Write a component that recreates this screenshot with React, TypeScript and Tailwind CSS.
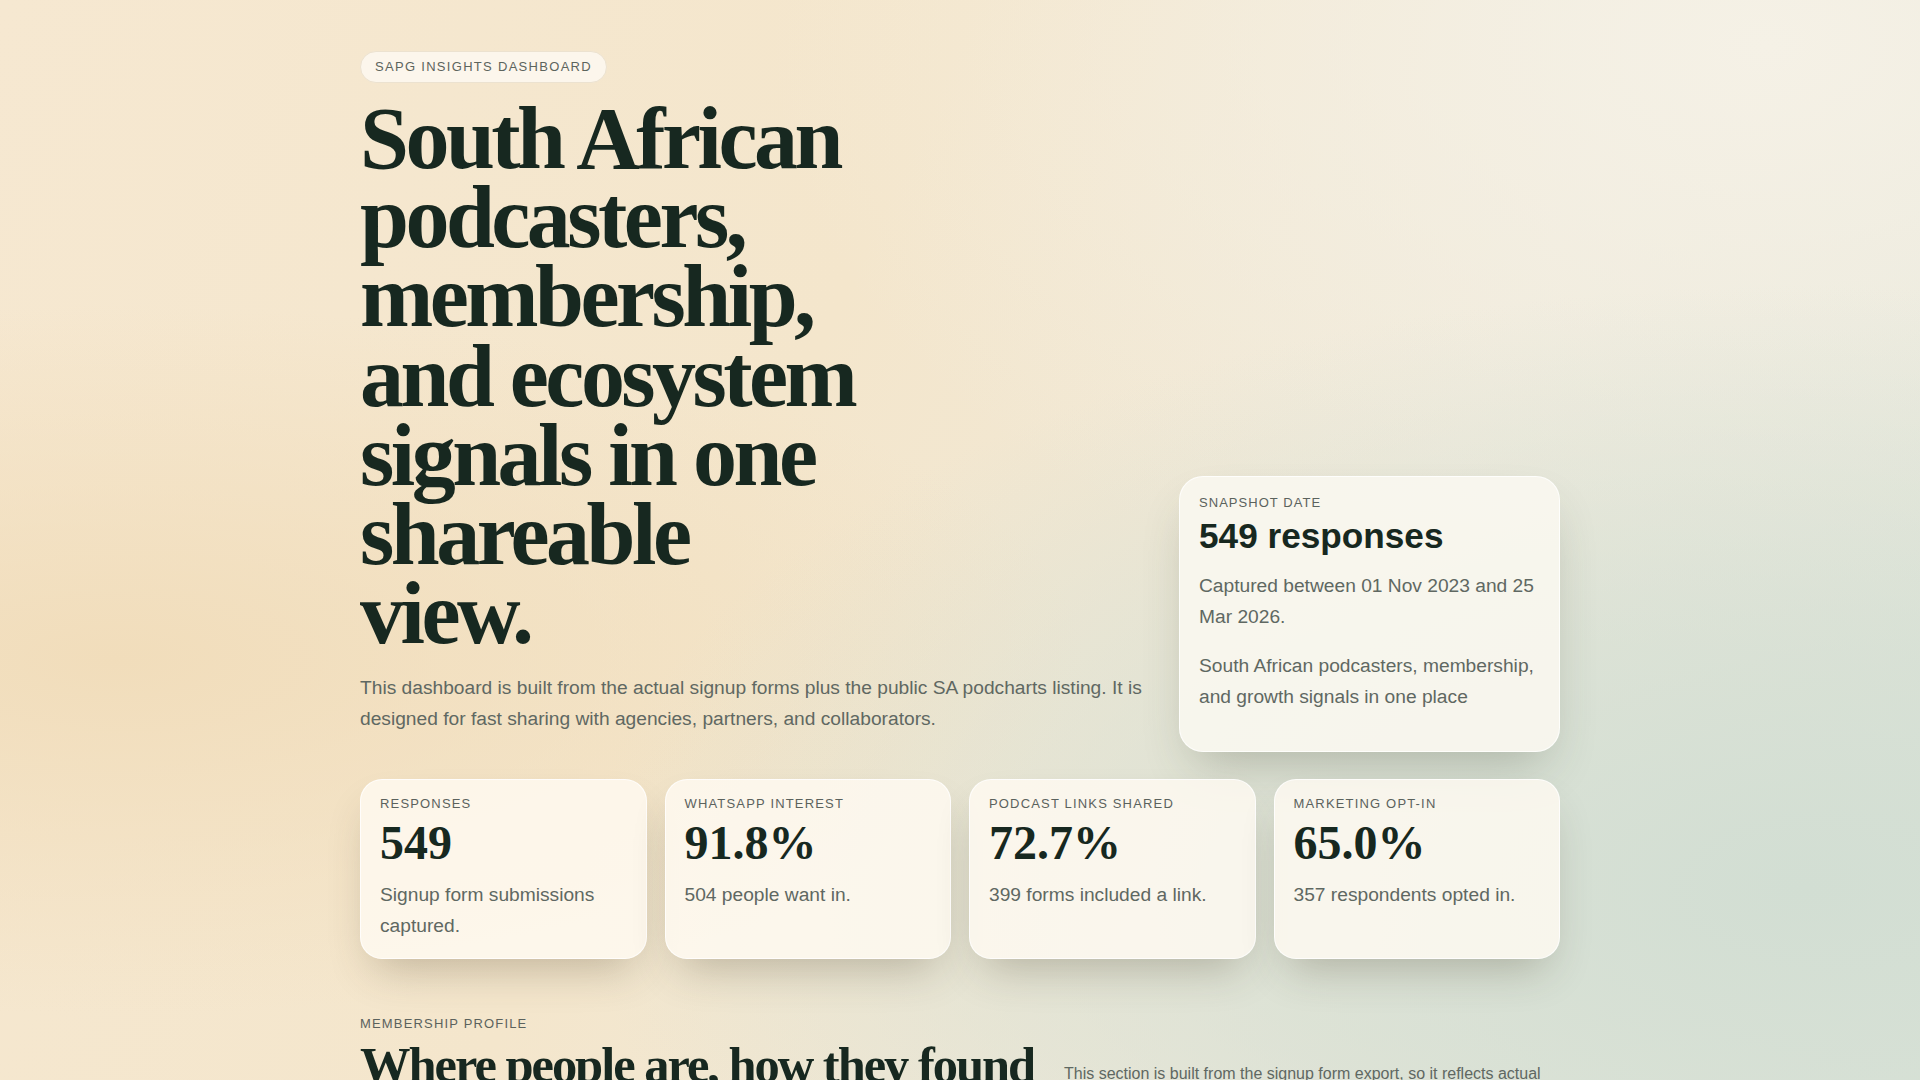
const serif = "font-['Liberation_Serif','Times_New_Roman',serif]";

const stats = [
  { label: 'Responses', value: '549', note: 'Signup form submissions captured.' },
  { label: 'WhatsApp interest', value: '91.8%', note: '504 people want in.' },
  { label: 'Podcast links shared', value: '72.7%', note: '399 forms included a link.' },
  { label: 'Marketing opt-in', value: '65.0%', note: '357 respondents opted in.' },
];

function StatCard({ label, value, note }: { label: string; value: string; note: string }) {
  return (
    <div className="rounded-[22px] border border-white/80 bg-[rgba(255,250,242,0.82)] px-[19px] pt-[15px] pb-[17px] shadow-[0_22px_44px_-14px_rgba(70,60,35,0.3)]">
      <div className="text-[13px] leading-[1.4] tracking-[0.09em] text-[#5b625d] uppercase">{label}</div>
      <div className={`${serif} mt-[6px] text-[48px] leading-none font-bold text-[#172820]`}>{value}</div>
      <p className="mt-[13px] text-[19.2px] leading-[1.6] text-[#5f6862]">{note}</p>
    </div>
  );
}

export default function App() {
  return (
    <div className="min-h-screen overflow-hidden bg-[radial-gradient(ellipse_at_94%_78%,#d2ded3_0%,rgba(210,222,211,0.6)_22%,rgba(210,222,211,0)_48%),radial-gradient(ellipse_at_6%_58%,#f1ddbb_0%,rgba(241,221,187,0)_38%),radial-gradient(ellipse_at_92%_4%,#f5f1e6_0%,rgba(245,241,230,0)_40%),linear-gradient(115deg,#f6e8d1_0%,#f4e6cc_40%,#efe9d9_68%,#dfe5da_100%)] font-['Liberation_Sans',Arial,sans-serif] text-[#172820]">
      <main className="mx-auto max-w-[1200px] pt-[51px]">
        <div className="inline-flex h-[32px] items-center rounded-full border border-[#ece2d0] bg-[#fcf6ec] px-[14px] text-[13px] tracking-[0.1em] text-[#5c645d] uppercase">
          SAPG insights dashboard
        </div>

        <section className="mt-4 grid grid-cols-[minmax(0,1fr)_381px] items-end gap-x-8">
          <div>
            <h1 className={`${serif} max-w-[510px] text-[88px] leading-[0.9] font-bold tracking-[-0.04em] text-[#172820]`}>
              South African podcasters, membership, and ecosystem signals in one shareable view.
            </h1>
            <p className="mt-[20px] mb-[17px] text-[19.2px] leading-[1.6] text-[#5f6862]">
              This dashboard is built from the actual signup forms plus the public SA podcharts listing. It is designed for fast sharing with agencies, partners, and collaborators.
            </p>
          </div>

          <aside className="rounded-[24px] border border-white/80 bg-[rgba(250,247,240,0.9)] px-[19px] pt-[17px] pb-[38px] shadow-[0_24px_50px_-16px_rgba(60,65,45,0.3)]">
            <div className="text-[13px] leading-[1.4] tracking-[0.08em] text-[#5b625d] uppercase">Snapshot date</div>
            <h2 className="mt-[5px] text-[35.2px] leading-[1.1] font-bold text-[#172820]">549 responses</h2>
            <p className="mt-[15px] text-[19.2px] leading-[1.6] text-[#5f6862]">Captured between 01 Nov 2023 and 25 Mar 2026.</p>
            <p className="mt-[19px] text-[19.2px] leading-[1.6] text-[#5f6862]">South African podcasters, membership, and growth signals in one place</p>
          </aside>
        </section>

        <section className="mt-[27px] grid grid-cols-4 gap-[18px]">
          {stats.map((s) => (
            <StatCard key={s.label} {...s} />
          ))}
        </section>

        <section className="mt-[56px]">
          <div className="text-[13px] leading-[1.4] tracking-[0.09em] text-[#5b625d] uppercase">Membership profile</div>
          <div className="mt-[7px] flex items-end justify-between gap-[10px]">
            <h2 className={`${serif} flex-1 text-[50.5px] leading-[0.96] font-bold tracking-[-0.04em] text-[#172820]`}>
              Where people are, how they found them, and what they want next.
            </h2>
            <p className="w-[496px] shrink-0 text-[16px] leading-[1.6] text-[#5f6862]">
              This section is built from the signup form export, so it reflects actual members and applicants who signed up, rather than the public podcast directory listing.
            </p>
          </div>
        </section>
      </main>
    </div>
  );
}
